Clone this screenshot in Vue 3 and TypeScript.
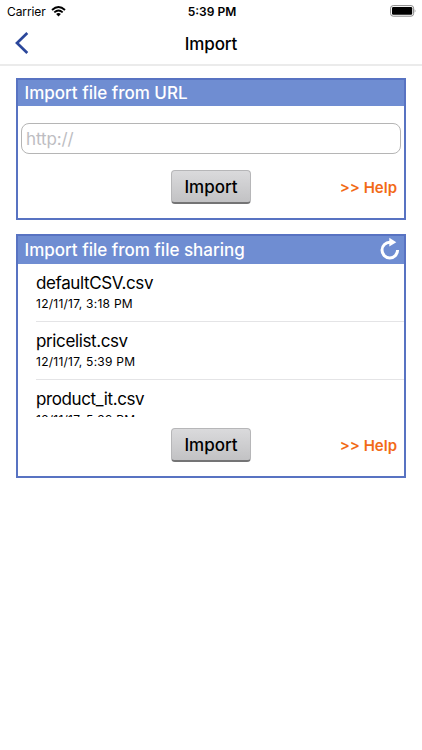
<script setup lang="ts">
import { ref } from 'vue'

interface SharedFile {
  name: string
  date: string
}

const url = ref<string>('')
const files: SharedFile[] = [
  { name: 'defaultCSV.csv', date: '12/11/17, 3:18 PM' },
  { name: 'pricelist.csv', date: '12/11/17, 5:39 PM' },
  { name: 'product_it.csv', date: '12/11/17, 5:39 PM' },
]
</script>

<template>
  <main class="screen">
    <div class="status">
      <div class="carrier">
        <span>Carrier</span>
        <svg class="wifi" viewBox="0 0 15 11" width="15" height="11">
          <path d="M1 4Q7.5-1.8 14 4M3.3 6.4Q7.5 2.7 11.7 6.4" fill="none" stroke="#000" stroke-width="1.9" />
          <path d="M5.1 8Q7.5 6 9.9 8L7.5 10.5Z" />
        </svg>
      </div>
      <span class="time">5:39 PM</span>
      <svg class="battery" viewBox="0 0 27 12" width="27" height="12">
        <rect x=".6" y=".6" width="23" height="10.6" rx="2.6" fill="none" stroke="#888" />
        <rect x="2" y="2" width="20.2" height="7.8" rx="1.2" />
        <path d="M24.7 4Q26.4 5.9 24.7 7.8Z" fill="#888" />
      </svg>
    </div>
    <header class="nav">
      <svg class="back" viewBox="0 0 14 22" width="14" height="22">
        <path d="M12.3 1L2 11L12.3 21" fill="none" stroke="#2b479b" stroke-width="2.7" />
      </svg>
      <h1>Import</h1>
    </header>

    <section class="panel url-panel">
      <h2><span>Import file from URL</span></h2>
      <input v-model="url" type="text" placeholder="http://" />
      <div class="actions">
        <button type="button">Import</button>
        <a class="help">&gt;&gt; Help</a>
      </div>
    </section>

    <section class="panel share-panel">
      <h2>
        <span>Import file from file sharing</span>
        <svg class="refresh" viewBox="0 0 20 23" width="20" height="23">
          <path d="M10 5.3A7.8 7.8 0 1 0 17.6 13" fill="none" stroke="#fff" stroke-width="3" />
          <path d="M9.3 .8L16.3 5.2L9.3 9.6Z" fill="#fff" />
        </svg>
      </h2>
      <ul>
        <li v-for="file in files" :key="file.name">
          <span class="name">{{ file.name }}</span>
          <span class="date">{{ file.date }}</span>
        </li>
      </ul>
      <div class="actions">
        <button type="button">Import</button>
        <a class="help">&gt;&gt; Help</a>
      </div>
    </section>
  </main>
</template>

<style>
body {
  background: #fff;
}
</style>

<style scoped>
* {
  box-sizing: border-box;
}
.screen {
  height: 750px;
  overflow: hidden;
  background: #fff;
  color: #000;
  font-family: Inter, "Liberation Sans", sans-serif;
}
.status {
  display: grid;
  grid-template-columns: 1fr auto 1fr;
  align-items: center;
  height: 22px;
  padding: 0 5px 0 7px;
  font-size: 12px;
}
.carrier {
  display: flex;
  align-items: center;
  gap: 5px;
  letter-spacing: -0.1px;
}
.time {
  font-weight: 600;
}
.battery {
  justify-self: end;
}
.nav {
  display: grid;
  grid-template-columns: 1fr auto 1fr;
  align-items: center;
  height: 44px;
  padding: 2px 15px 0;
  border-bottom: 2px solid #ebebeb;
}
.back {
  margin-bottom: 2px;
}
h1 {
  margin: 0;
  font-size: 17px;
  font-weight: 500;
  letter-spacing: -0.1px;
}
.panel {
  width: 390px;
  margin-left: 16px;
  border: 2px solid #5873c2;
}
.url-panel {
  height: 142px;
  margin-top: 12px;
}
.share-panel {
  height: 244px;
  margin-top: 14px;
}
h2 {
  display: flex;
  align-items: center;
  justify-content: space-between;
  height: 26px;
  margin: 0;
  padding: 0 4px 0 6.5px;
  background: #6f8dd2;
  color: #fff;
  font-size: 17px;
  font-weight: 500;
}
.share-panel h2 {
  height: 28px;
}
.refresh {
  margin-bottom: 3px;
}
input {
  display: block;
  width: 380px;
  height: 31px;
  margin: 17px 0 0 3px;
  padding: 0 4px;
  border: 1px solid #b5b5b5;
  border-radius: 8px;
  outline: 0;
  background: #fff;
  font: 17px Inter, sans-serif;
  letter-spacing: -0.1px;
}
input::placeholder {
  color: #bdbdc2;
}
.actions {
  display: grid;
  grid-template-columns: 1fr 80px 1fr;
  align-items: center;
  margin-top: 16px;
}
button {
  grid-column: 2;
  width: 80px;
  height: 34px;
  padding: 1px 0 0;
  border: 1px solid #b6b6b8;
  border-bottom: 2px solid #747475;
  border-radius: 4px;
  background: linear-gradient(#dadadc, #c2c2c4);
  color: #000;
  font: 500 17px Inter, sans-serif;
}
.help {
  justify-self: end;
  margin-right: 7px;
  color: #f26a17;
  font-size: 15px;
  font-weight: 600;
}
ul {
  height: 153px;
  margin: 0;
  padding: 0 0 0 18px;
  overflow: hidden;
  list-style: none;
}
li {
  display: flex;
  flex-direction: column;
  height: 58px;
  padding-top: 8px;
  border-bottom: 1px solid #e4e4e6;
}
.name {
  font-size: 17px;
  line-height: 22px;
  letter-spacing: -0.38px;
}
.date {
  margin-top: 2px;
  font-size: 12px;
  line-height: 16px;
  letter-spacing: 0.25px;
}
.share-panel .actions {
  margin-top: 11px;
}
</style>
